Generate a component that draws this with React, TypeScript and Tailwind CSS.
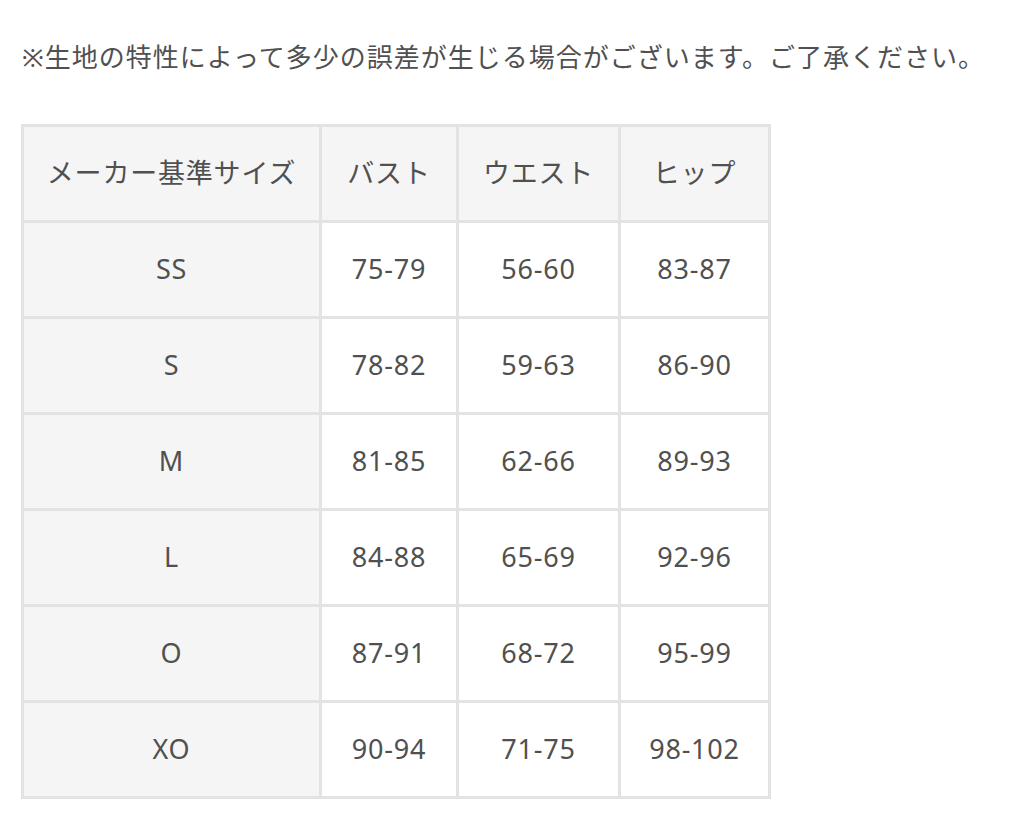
import React from "react";

const rows = [
  ["SS", "75-79", "56-60", "83-87"],
  ["S", "78-82", "59-63", "86-90"],
  ["M", "81-85", "62-66", "89-93"],
  ["L", "84-88", "65-69", "92-96"],
  ["O", "87-91", "68-72", "95-99"],
  ["XO", "90-94", "71-75", "98-102"],
];

const font = { fontFamily: '"Noto Sans", "Noto Sans CJK JP", sans-serif' };

export default function App() {
  return (
    <div className="w-[1017px] h-[817px] bg-white text-[#505050] overflow-hidden" style={font}>
      <div className="pt-[38px] pl-[22px] text-[26px] leading-[38px] tracking-[1px] whitespace-nowrap">
        ※生地の特性によって多少の誤差が生じる場合がございます。ご了承ください。
      </div>
      <table className="ml-[21px] mt-[48px] border-collapse border-[3px] border-[#e3e3e3] text-[27px] tracking-[0.8px]">
        <thead>
          <tr className="h-[96px] bg-[#f5f5f5]">
            <th className="w-[298px] border-[3px] border-[#e3e3e3] font-normal text-center">メーカー基準サイズ</th>
            <th className="w-[137px] border-[3px] border-[#e3e3e3] font-normal text-center">バスト</th>
            <th className="w-[162px] border-[3px] border-[#e3e3e3] font-normal text-center">ウエスト</th>
            <th className="w-[150px] border-[3px] border-[#e3e3e3] font-normal text-center">ヒップ</th>
          </tr>
        </thead>
        <tbody>
          {rows.map((r) => (
            <tr key={r[0]} className="h-[96px]">
              <td className="border-[3px] border-[#e3e3e3] bg-[#f5f5f5] text-center">{r[0]}</td>
              <td className="border-[3px] border-[#e3e3e3] text-center">{r[1]}</td>
              <td className="border-[3px] border-[#e3e3e3] text-center">{r[2]}</td>
              <td className="border-[3px] border-[#e3e3e3] text-center">{r[3]}</td>
            </tr>
          ))}
        </tbody>
      </table>
    </div>
  );
}
